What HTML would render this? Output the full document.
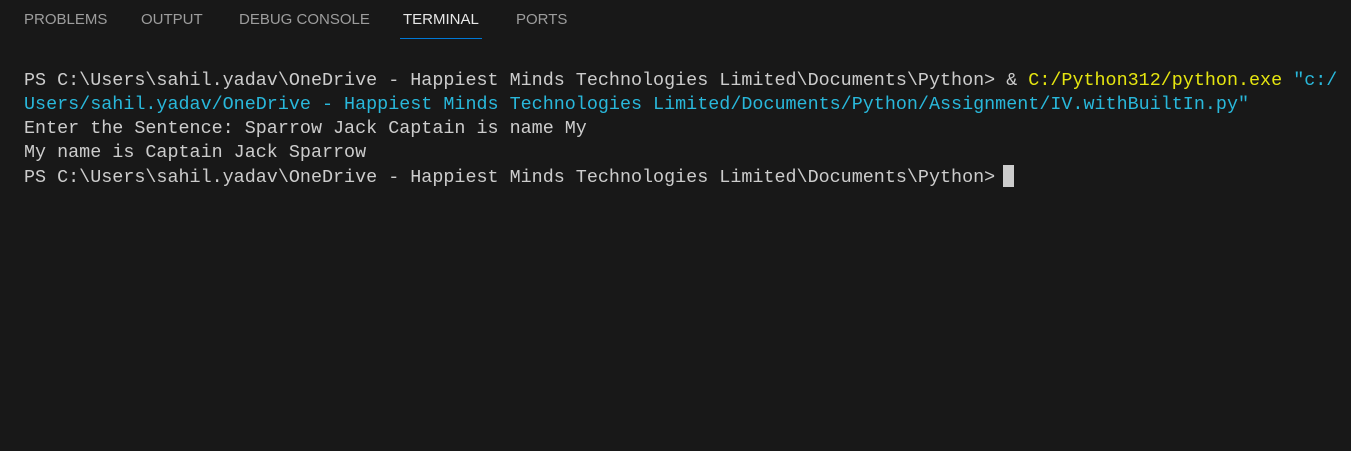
<!DOCTYPE html>
<html><head><meta charset="utf-8"><style>
html,body{margin:0;padding:0;background:#181818;width:1351px;height:451px;overflow:hidden}
.tab{position:absolute;top:10px;font:15px "Liberation Sans",sans-serif;color:#9d9d9d;line-height:20px}
.act{color:#e7e7e7}
.ul{position:absolute;left:400px;top:38px;width:82px;height:1px;background:#0078d4}
.term{position:absolute;left:24px;top:69px;font:18.4px "Liberation Mono",monospace;line-height:24px;color:#cccccc;white-space:pre}
.y{color:#e5e510}.c{color:#29b8db}
.cur{display:inline-block;width:11px;height:22px;background:#cccccc;vertical-align:-5px;margin-left:-3px}
</style></head><body>
<div class="tab" style="left:24px">PROBLEMS</div>
<div class="tab" style="left:141px">OUTPUT</div>
<div class="tab" style="left:239px">DEBUG CONSOLE</div>
<div class="tab act" style="left:403px">TERMINAL</div>
<div class="tab" style="left:516px">PORTS</div>
<div class="ul"></div>
<div class="term">PS C:\Users\sahil.yadav\OneDrive - Happiest Minds Technologies Limited\Documents\Python&gt; &amp; <span class="y">C:/Python312/python.exe</span> <span class="c">"c:/</span>
<span class="c">Users/sahil.yadav/OneDrive - Happiest Minds Technologies Limited/Documents/Python/Assignment/IV.withBuiltIn.py"</span>
Enter the Sentence: Sparrow Jack Captain is name My
My name is Captain Jack Sparrow
PS C:\Users\sahil.yadav\OneDrive - Happiest Minds Technologies Limited\Documents\Python&gt; <span class="cur"></span></div>
</body></html>
